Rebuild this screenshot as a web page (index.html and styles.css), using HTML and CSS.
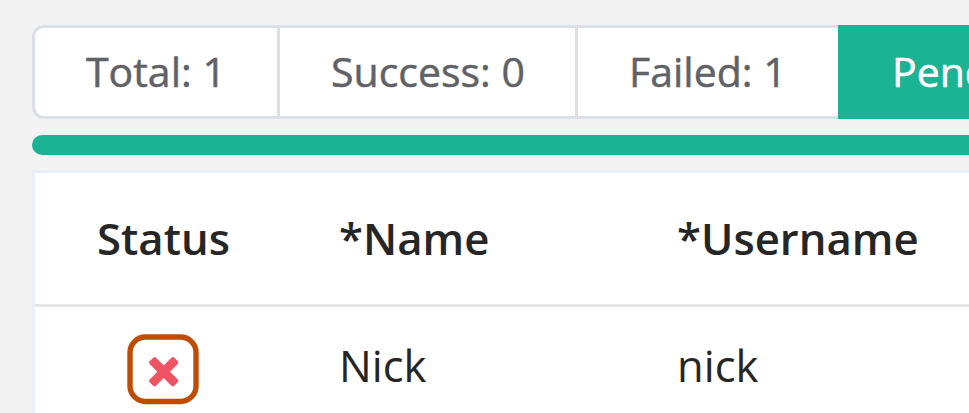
FILE: index.html
```html
<!DOCTYPE html>
<html lang="en">
<head>
<meta charset="utf-8">
<title>Import status</title>
<link rel="stylesheet" href="styles.css">
</head>
<body>
<div class="filters">
  <div class="filter total"><span>Total: 1</span></div>
  <div class="filter success"><span>Success: 0</span></div>
  <div class="filter failed"><span>Failed: 1</span></div>
  <div class="filter pending"><span>Pending: 0</span></div>
</div>
<div class="progress"></div>
<div class="table">
  <div class="row head"><div>Status</div><div>*Name</div><div>*Username</div></div>
  <div class="row item">
    <div class="status-mark"><svg viewBox="0 0 72 72" width="72" height="72"><rect class="ring" x="3" y="3" width="66" height="64.5" rx="15.5"/><g class="cross" transform="translate(36.7 37.7)"><rect x="-17.4" y="-4.5" width="34.8" height="9" rx="2" transform="rotate(45)"/><rect x="-17.4" y="-4.5" width="34.8" height="9" rx="2" transform="rotate(-45)"/></g></svg></div>
    <div>Nick</div><div>nick</div>
  </div>
</div>
</body>
</html>
```
FILE: styles.css
```css
* { box-sizing: border-box; }
body {
  margin: 0;
  padding: 25px 0 0 32px;
  height: 413px;
  overflow: hidden;
  background: #f3f3f3;
  font-family: "Open Sans", sans-serif;
  color: #262626;
}
.filters {
  display: flex;
  height: 94px;
  font-size: 41px;
  line-height: 86px;
  color: #606266;
  white-space: nowrap;
}
.filter {
  flex: none;
  border: 3px solid #dcdfe6;
  border-left-width: 0;
  background: #fff;
  padding-left: 51px;
  -webkit-text-stroke: 0.5px currentColor;
}
.total { width: 248px; border-left-width: 3px; border-radius: 12px 0 0 12px; }
.success { width: 298px; }
.failed { width: 260px; border-right: 0; }
.pending {
  flex: 1;
  min-width: 0;
  overflow: hidden;
  background: #1ab394;
  border-color: #1ab394;
  border-right: 0;
  color: #fff;
  padding-left: 54px;
}
.progress {
  height: 20px;
  margin-top: 16px;
  border-radius: 10px 0 0 10px;
  background: #1ab394;
}
.table {
  height: 243px;
  margin-top: 15px;
  border: 3px solid #ebeef5;
  border-width: 3px 0 0 3px;
  background: #fff;
  font-size: 43.7px;
}
.row { display: grid; grid-template-columns: 304px 338px 1fr; }
.head {
  height: 134px;
  border-bottom: 3px solid #e6e6e6;
  font-weight: 600;
  line-height: 130px;
}
.head > :first-child { padding-left: 62px; }
.item { height: 106px; line-height: 118px; font-size: 43.5px; overflow: hidden; }
.status-mark { padding: 27px 0 0 92px; line-height: 0; }
.status-mark svg { display: block; }
.ring { fill: none; stroke: #c04c04; stroke-width: 5.4; }
.cross { fill: #ed5565; }
```
